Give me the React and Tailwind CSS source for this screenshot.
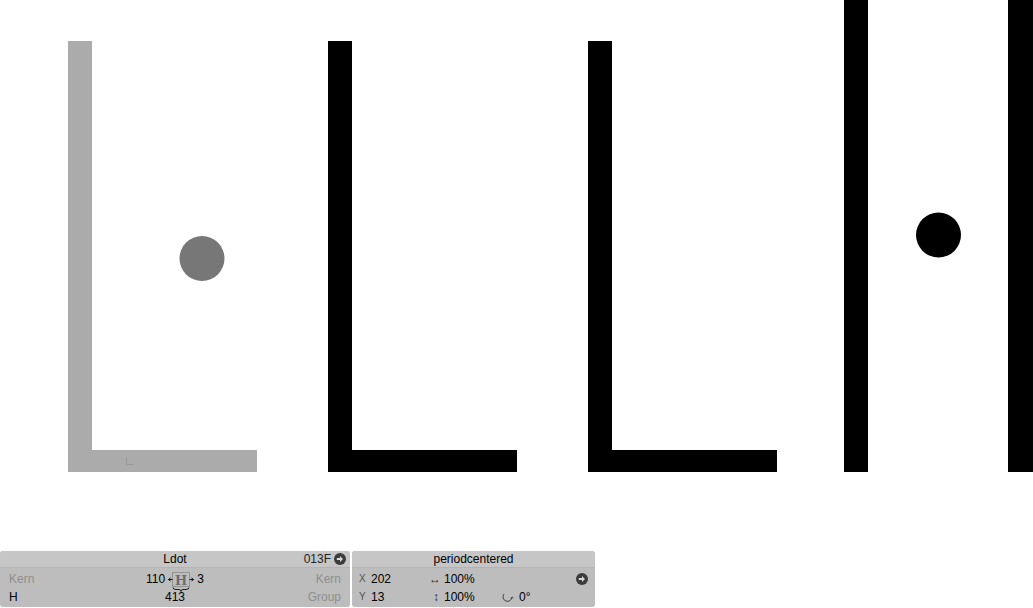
import React from "react";

const font = { fontFamily: '"Liberation Sans", Arial, sans-serif' };

const ArrowCircle = () => (
  <svg width="12" height="12" viewBox="0 0 12 12">
    <circle cx="6" cy="6" r="6" fill="#3c3c3c" />
    <path d="M2.8 5h3.2V3l3 3-3 3V7H2.8z" fill="#d8d8d8" />
  </svg>
);

const KernGlyph = () => (
  <svg width="26" height="20" viewBox="0 0 26 20" overflow="visible" className="mx-[3px] mt-[4px] -mb-[2px]">
    <rect x="4.5" y="0.5" width="17" height="14" fill="none" stroke="#555" strokeDasharray="1 1" strokeWidth="0.8" />
    <text x="13" y="12.5" textAnchor="middle" fontSize="15" fontWeight="bold" fill="#6b6b6b" fontFamily='"Liberation Serif", serif'>H</text>
    <path d="M0.5 7.5h4M0.5 7.5l2-1.6M0.5 7.5l2 1.6" stroke="#111" strokeWidth="1" fill="none" />
    <path d="M25.5 7.5h-4M25.5 7.5l-2-1.6M25.5 7.5l-2 1.6" stroke="#111" strokeWidth="1" fill="none" />
    <path d="M5 15.5q0 2 3 2h3q2 0 2 2q0-2 2-2h3q3 0 3-2" stroke="#111" strokeWidth="0.9" fill="none" />
  </svg>
);

export default function App() {
  return (
    <div className="w-[1033px] h-[608px] bg-white flex flex-col overflow-hidden" style={font}>
      {/* glyph canvas */}
      <svg width="1033" height="551" viewBox="0 0 1033 551" className="block shrink-0">
        <path d="M68 41h24v409h165v22H68z" fill="#ababab" />
        <path d="M126.5 457.5v7h7" stroke="#999" strokeWidth="1" fill="none" />
        <circle cx="202" cy="258.5" r="22.5" fill="#777777" />
        <path d="M328 41h24v409h165v22H328z" fill="#000" />
        <path d="M588 41h24v409h165v22H588z" fill="#000" />
        <rect x="844" y="0" width="24" height="472" fill="#000" />
        <circle cx="938.5" cy="235" r="22.5" fill="#000" />
        <rect x="1008" y="0" width="25" height="472" fill="#000" />
      </svg>

      {/* info panels */}
      <div className="flex gap-[2px] text-[12px] leading-none">
        <div className="w-[350px] h-[56px] rounded-[3px] overflow-hidden bg-[#bdbdbd] flex flex-col">
          <div className="h-[17px] bg-[#c6c6c6] border-b border-[#b3b3b3] flex items-center relative px-2">
            <span className="flex-1 text-center text-black">Ldot</span>
            <span className="absolute right-[4px] flex items-center gap-[3px] text-[#222]">
              013F <ArrowCircle />
            </span>
          </div>
          <div className="flex-1 grid grid-cols-[1fr_auto_1fr] grid-rows-[18px_18px] px-[9px] pt-[2px]">
            <span className="self-center text-[#8e8e8e]">Kern</span>
            <div className="flex items-center justify-center text-black h-[18px]">
              <span>110</span>
              <KernGlyph />
              <span>3</span>
            </div>
            <span className="self-center justify-self-end text-[#8e8e8e]">Kern</span>
            <span className="self-center text-black">H</span>
            <span className="self-center justify-self-center text-black">413</span>
            <span className="self-center justify-self-end text-[#8e8e8e]">Group</span>
          </div>
        </div>

        <div className="w-[243px] h-[56px] rounded-[3px] overflow-hidden bg-[#bdbdbd] flex flex-col">
          <div className="h-[17px] bg-[#c6c6c6] border-b border-[#b3b3b3] flex items-center justify-center text-black">
            periodcentered
          </div>
          <div className="flex-1 grid grid-rows-[18px_18px] pl-[7px] pr-[7px] pt-[2px] text-black">
            <div className="flex items-center">
              <span className="w-[12px] text-[10px] text-[#555]">X</span>
              <span className="w-[58px]">202</span>
              <span className="w-[15px] text-[#333]">↔</span>
              <span>100%</span>
              <span className="ml-auto">
                <ArrowCircle />
              </span>
            </div>
            <div className="flex items-center">
              <span className="w-[12px] text-[10px] text-[#555]">Y</span>
              <span className="w-[62px]">13</span>
              <span className="w-[11px] text-[#333]">↕</span>
              <span className="w-[58px]">100%</span>
              <svg width="12" height="10" viewBox="0 0 12 10" className="mr-[5px]">
                <path d="M2 2a4.5 4.5 0 1 0 8 3" stroke="#444" strokeWidth="1" fill="none" />
                <path d="M9 6.5l1-1.5 1.5 1" stroke="#444" strokeWidth="1" fill="none" />
              </svg>
              <span>0°</span>
            </div>
          </div>
        </div>
      </div>
    </div>
  );
}
